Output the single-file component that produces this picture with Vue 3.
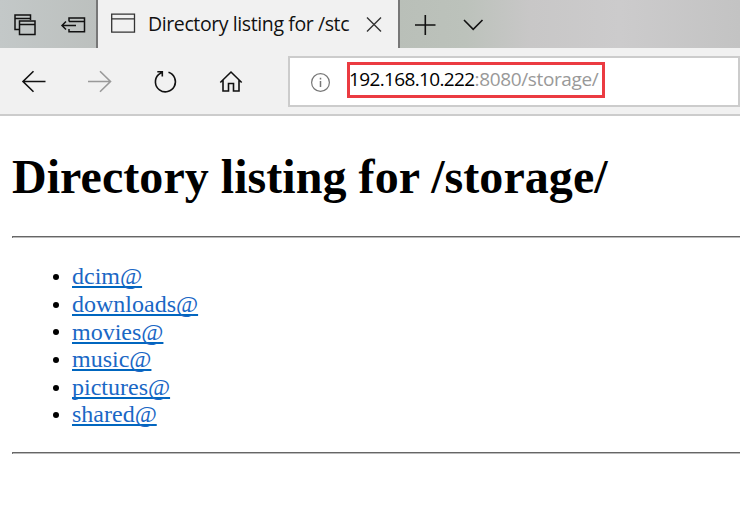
<script setup>
const entries = ['dcim@', 'downloads@', 'movies@', 'music@', 'pictures@', 'shared@']
</script>

<template>
  <div class="browser">
    <header class="tabs">
      <div class="tab-tools">
        <svg width="97" height="48" viewBox="0 0 97 48" fill="none" stroke="#111" stroke-width="1.5">
          <path d="M19 29.500H15V15H30.500V20M15 18.500H30.500M19.500 21H35V34.500H19.500ZM19.500 24.500H35" />
          <path d="M69 21.500V18H84.500V31.800H69V29M69 21.500H84.500M62.500 25.500H76M66 21.500L62 25.500L66 29.500" />
        </svg>
      </div>
      <div class="tab">
        <svg class="page-icon" width="26" height="22" viewBox="0 0 26 22" fill="none" stroke="#333" stroke-width="1.3">
          <path d="M1.700 2.200H24.500V20.200H1.700ZM1.700 6.800H24.500" />
        </svg>
        <div class="title"><span>Directory listing for /stc</span></div>
        <svg class="close" width="16" height="16" viewBox="0 0 16 16" stroke="#333" stroke-width="1.4">
          <path d="M1 .5L15 14.500M15 .5L1 14.500" />
        </svg>
      </div>
      <svg class="tab-actions" width="100" height="48" viewBox="0 0 100 48" fill="none" stroke="#111" stroke-width="1.6">
        <path d="M15 25H35.500M25.300 15V35M64 20L73.200 29.300L82.500 20" />
      </svg>
    </header>
    <nav class="toolbar">
      <svg class="nav-icons" width="288" height="66" viewBox="0 0 288 66" fill="none" stroke="#111" stroke-width="1.6">
        <path d="M23 33.500H45.500M33.500 23.200L23 33.500L33.500 43.800" />
        <path stroke="#999" d="M88 33.500H110.500M100 23.200L110.500 33.500L100 43.800" />
        <path d="M168.500 24.300A10 10 0 1 1 158.500 26.600L161.800 24.300M157.300 23.800H162.300V28.500" />
        <path d="M220.300 34.500L231 24L241.700 34.500M223 32V43H228.500V35.500H233.500V43H239V32" />
      </svg>
      <div class="address">
        <svg class="info" width="20" height="20" viewBox="0 0 20 20" fill="none" stroke="#777" stroke-width="1.2">
          <circle cx="10.500" cy="10.500" r="8.900" />
          <path d="M10.500 9V15M10.500 5.700V7.500" stroke-width="1.500" />
        </svg>
        <div class="url"><span class="host">192.168.10.222</span><span class="rest">:8080/storage/</span></div>
      </div>
    </nav>
    <main class="page">
      <h1>Directory listing for /storage/</h1>
      <hr>
      <ul>
        <li v-for="name in entries" :key="name"><a href="#">{{ name }}</a></li>
      </ul>
      <hr>
    </main>
  </div>
</template>

<style>
body { margin: 0; background: #fff; }
</style>

<style scoped>
.browser { width: 740px; height: 528px; overflow: hidden; background: #fff; font-family: "Open Sans", sans-serif; }
svg { display: block; flex: none; }
.tabs { display: flex; height: 48px; background: linear-gradient(90deg, #c3c8c8 0, #bcc0be 97px, #b9bfb8 398px, #bcc2bb 465px, #c8c7c7 530px, #cccbcc 620px, #c3c3c3 740px); }
.tab-tools { width: 96px; overflow: hidden; }
.tab { display: flex; box-sizing: border-box; width: 304px; padding-left: 12px; background: #f1f1f1; border-left: 2px solid #777; border-right: 2px solid #777; }
.page-icon { margin-top: 12px; }
.title { width: 203px; margin-left: 12px; overflow: hidden; white-space: nowrap; font-size: 19.5px; line-height: 48px; letter-spacing: -0.4px; color: #111; }
.close { margin: 17px 0 0 15px; }
.toolbar { display: flex; height: 66px; background: #f1f1f1; border-bottom: 2px solid #ccc; }
.address { display: flex; box-sizing: border-box; width: 460px; height: 51px; margin-top: 8px; background: #fff; border: 2px solid #ccc; }
.info { margin: 14px 0 0 20px; }
.url { box-sizing: border-box; width: 258px; height: 36px; margin: 4px 0 0 17px; border: 3px solid #eb3b41; line-height: 28px; font-size: 19px; white-space: nowrap; }
.host { margin-left: -1px; color: #000; letter-spacing: -0.64px; }
.rest { color: #999; letter-spacing: -0.36px; }
.page { padding: 33px 0 0 12px; font-family: "Liberation Serif", serif; color: #000; }
h1 { margin: 0; font-size: 48px; line-height: 56px; font-weight: bold; letter-spacing: 0.05px; white-space: nowrap; }
hr { margin: 31px 0 0; height: 1px; border: 0; border-top: 1px solid #666; border-left: 1px solid #777; background: #bbb; }
ul { margin: 25.4px 0 0; padding: 0 0 0 41px; list-style: none; font-size: 24px; line-height: 27.6px; }
li { display: flex; align-items: center; height: 27.6px; }
li::before { content: ""; width: 6px; height: 6px; margin-right: 13px; border-radius: 50%; background: #000; }
a { color: #1a67c5; text-decoration: underline; text-decoration-color: #0066bf; text-decoration-thickness: 2px; text-underline-offset: 2px; text-decoration-skip-ink: none; }
ul + hr { margin-top: 23px; }
</style>
